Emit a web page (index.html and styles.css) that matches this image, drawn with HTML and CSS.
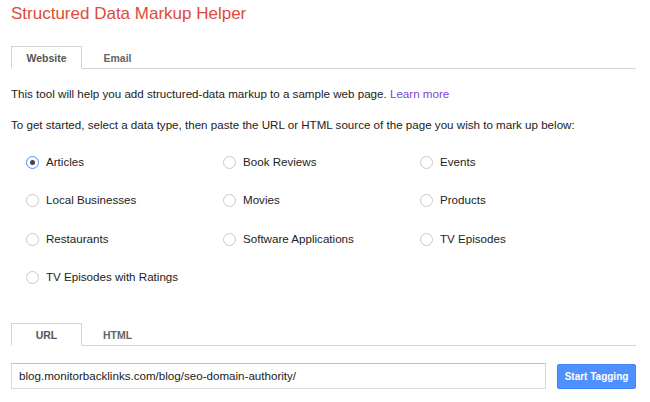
FILE: index.html
```html
<!DOCTYPE html>
<html>
<head>
<meta charset="utf-8">
<link rel="stylesheet" href="styles.css">
</head>
<body>
<div class="page">
  <h1 class="title">Structured Data Markup Helper</h1>
  <div class="tabs top-tabs">
    <div class="tab active">Website</div>
    <div class="tab">Email</div>
  </div>
  <p class="intro">This tool will help you add structured-data markup to a sample web page. <a class="link" href="#">Learn more</a></p>
  <p class="intro second">To get started, select a data type, then paste the URL or HTML source of the page you wish to mark up below:</p>
  <div class="types">
    <label class="opt"><span class="radio checked"></span>Articles</label>
    <label class="opt"><span class="radio"></span>Book Reviews</label>
    <label class="opt"><span class="radio"></span>Events</label>
    <label class="opt"><span class="radio"></span>Local Businesses</label>
    <label class="opt"><span class="radio"></span>Movies</label>
    <label class="opt"><span class="radio"></span>Products</label>
    <label class="opt"><span class="radio"></span>Restaurants</label>
    <label class="opt"><span class="radio"></span>Software Applications</label>
    <label class="opt"><span class="radio"></span>TV Episodes</label>
    <label class="opt"><span class="radio"></span>TV Episodes with Ratings</label>
  </div>
  <div class="tabs bottom-tabs">
    <div class="tab active">URL</div>
    <div class="tab">HTML</div>
  </div>
  <div class="url-row">
    <div class="url-input">blog.monitorbacklinks.com/blog/seo-domain-authority/</div>
    <button class="start-btn">Start Tagging</button>
  </div>
</div>
</body>
</html>
```
FILE: styles.css
```css
html, body {
  margin: 0;
  padding: 0;
  background: #fff;
}
body {
  font-family: "Liberation Sans", Arial, sans-serif;
  color: #222;
}
.page {
  width: 625px;
  padding: 0 0 0 11px;
}
.title {
  margin: 0;
  padding-top: 4px;
  font-size: 17px;
  font-weight: normal;
  color: #dd4b39;
  line-height: 20px;
}
.tabs {
  display: flex;
  border-bottom: 1px solid #d3d3d3;
}
.top-tabs {
  margin-top: 22px;
}
.tab {
  width: 71px;
  height: 23px;
  box-sizing: border-box;
  font-size: 10.5px;
  font-weight: bold;
  color: #666;
  text-align: center;
  line-height: 22px;
  border: 1px solid transparent;
  margin-bottom: -1px;
}
.tab.active {
  border-color: #d3d3d3;
  border-bottom-color: #fff;
  background: #fff;
  color: #555;
}
.intro {
  margin: 0;
  font-size: 11.6px;
  line-height: 15px;
}
.tabs + .intro {
  margin-top: 17px;
}
.intro.second {
  margin-top: 16px;
}
.link {
  color: #7b43d6;
  text-decoration: none;
}
.types {
  display: grid;
  grid-template-columns: 197px 197px 197px;
  grid-auto-rows: 38.5px;
  padding-left: 15px;
  margin-top: 21px;
}
.opt {
  display: flex;
  align-items: center;
  height: 16px;
  font-size: 11.6px;
  color: #222;
}
.radio {
  width: 13px;
  height: 13px;
  box-sizing: border-box;
  border: 1px solid #c8c8c8;
  border-radius: 50%;
  margin-right: 7px;
  margin-top: 2px;
  display: flex;
  align-items: center;
  justify-content: center;
  background: #fff;
}
.radio.checked {
  border-color: #4d90fe;
}
.radio.checked::after {
  content: "";
  width: 5px;
  height: 5px;
  border-radius: 50%;
  background: #444;
}
.bottom-tabs {
  margin-top: 16px;
}
.url-row {
  display: flex;
  align-items: center;
  margin-top: 17px;
}
.url-input {
  width: 535px;
  height: 26px;
  box-sizing: border-box;
  border: 1px solid #d9d9d9;
  border-top-color: #c0c0c0;
  padding-left: 7px;
  font-size: 11.6px;
  line-height: 24px;
  color: #222;
}
.start-btn {
  margin-left: 11px;
  width: 79px;
  height: 25px;
  box-sizing: border-box;
  background: #4d90fe;
  border: 1px solid #3f85f5;
  border-radius: 2px;
  color: #fff;
  font-family: "Liberation Sans", Arial, sans-serif;
  font-size: 10px;
  font-weight: bold;
  padding: 0;
}
```
